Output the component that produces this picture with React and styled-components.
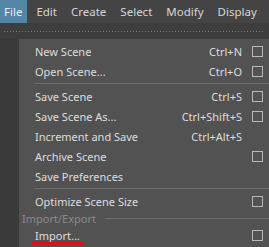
import React from 'react';
import styled, { createGlobalStyle } from 'styled-components';

// global
const GlobalStyle = createGlobalStyle`
  html, body {
    margin: 0;
    padding: 0;
    background: #3a3a3a;
    overflow: hidden;
  }
  body {
    font-family: "Noto Sans", "Open Sans", sans-serif;
    font-size: 11px;
    color: #dcdcdc;
  }
`;

// style
const AppStyle = styled.div`
  width: 269px;
  height: 247px;
  display: grid;
  grid-template-columns: minmax(0, 1fr);
  grid-template-rows: 23px 16px 1fr;
  overflow: hidden;
`;

const MenuBarStyle = styled.nav`
  display: flex;
  align-items: stretch;
  gap: 5px;
  overflow: hidden;
  background: #444444;
  white-space: nowrap;
`;

const MenuBarItemStyle = styled.div`
  display: flex;
  align-items: center;
  padding: 0 5px 0 4px;
  font-size: 11.5px;
  color: ${({ active }) => (active ? '#e8eef3' : '#d6d6d6')};
  background: ${({ active }) => (active ? '#5285a6' : 'transparent')};
`;

const ShelfStripStyle = styled.div`
  display: flex;
  align-items: center;
  padding: 0 4px;
  background: #3d3d3d;
`;

const DottedLineStyle = styled.div`
  flex: 1;
  height: 1px;
  background-image: linear-gradient(to right, #7a7a7a 1px, transparent 1px);
  background-size: 3px 1px;
`;

const WorkAreaStyle = styled.div`
  display: grid;
  grid-template-columns: 19px minmax(0, 1fr);
`;

const SidePanelStyle = styled.div`
  background: #3a3a3a;
`;

const MenuPanelStyle = styled.div`
  display: flex;
  flex-direction: column;
  padding-top: 2px;
  background: #525252;
`;

const MenuRowStyle = styled.div`
  display: grid;
  grid-template-columns: 1fr auto 21px;
  align-items: center;
  height: 20px;
  padding: 0 6px 0 16px;
`;

const MenuLabelStyle = styled.span`
  position: relative;
  justify-self: start;
  white-space: nowrap;
  color: #dedede;

  ${({ marked }) =>
    marked &&
    `
    &::after {
      content: '';
      position: absolute;
      left: -3px;
      right: -4px;
      bottom: -2px;
      height: 3px;
      background: #d4131b;
    }
  `}
`;

const ShortcutStyle = styled.span`
  white-space: nowrap;
  color: #dedede;
`;

const OptionBoxStyle = styled.span`
  justify-self: end;
  width: 9px;
  height: 9px;
  border: 1px solid #b8b8b8;
`;

const SeparatorStyle = styled.div`
  height: 1px;
  margin: 2px 0 2px 16px;
  background: #6c6c6c;
`;

const SectionHeaderStyle = styled.div`
  display: flex;
  align-items: center;
  gap: 9px;
  height: 14px;
  padding-left: 3px;
  color: #8a8a8a;

  &::after {
    content: '';
    flex: 1;
    height: 1px;
    background: #6c6c6c;
  }
`;

// data
const menuBar = ['File', 'Edit', 'Create', 'Select', 'Modify', 'Display', 'Windows'];

const menuItems = [
  { label: 'New Scene', shortcut: 'Ctrl+N', box: true },
  { label: 'Open Scene...', shortcut: 'Ctrl+O', box: true },
  { separator: true },
  { label: 'Save Scene', shortcut: 'Ctrl+S', box: true },
  { label: 'Save Scene As...', shortcut: 'Ctrl+Shift+S', box: true },
  { label: 'Increment and Save', shortcut: 'Ctrl+Alt+S' },
  { label: 'Archive Scene', box: true },
  { label: 'Save Preferences' },
  { separator: true },
  { label: 'Optimize Scene Size', box: true },
  { header: 'Import/Export' },
  { label: 'Import...', box: true, marked: true },
];

const MenuRow = ({ label, shortcut, box, marked }) => (
  <MenuRowStyle>
    <MenuLabelStyle marked={marked}>{label}</MenuLabelStyle>
    <ShortcutStyle>{shortcut}</ShortcutStyle>
    {box ? <OptionBoxStyle /> : <span />}
  </MenuRowStyle>
);

const App = () => (
  <>
    <GlobalStyle />
    <AppStyle>
      <MenuBarStyle>
        {menuBar.map((name) => (
          <MenuBarItemStyle key={name} active={name === 'File'}>
            {name}
          </MenuBarItemStyle>
        ))}
      </MenuBarStyle>
      <ShelfStripStyle>
        <DottedLineStyle />
      </ShelfStripStyle>
      <WorkAreaStyle>
        <SidePanelStyle />
        <MenuPanelStyle>
          {menuItems.map((item, i) => {
            if (item.separator) return <SeparatorStyle key={i} />;
            if (item.header)
              return <SectionHeaderStyle key={i}>{item.header}</SectionHeaderStyle>;
            return <MenuRow key={i} {...item} />;
          })}
        </MenuPanelStyle>
      </WorkAreaStyle>
    </AppStyle>
  </>
);

export default App;
